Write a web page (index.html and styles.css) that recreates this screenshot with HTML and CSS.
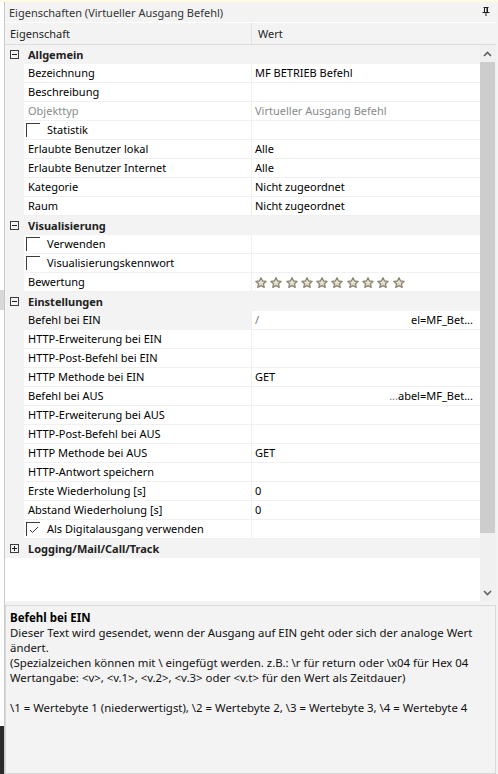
FILE: index.html
```html
<!DOCTYPE html>
<html lang="de">
<head>
    <meta charset="UTF-8">
    <title>Eigenschaften (Virtueller Ausgang Befehl)</title>
    <link rel="stylesheet" href="styles.css">
</head>
<body>
    <div class="topline"></div>
    <div class="frame">
        <div class="side">
            <div class="side-mark"></div>
            <div class="side-dark"></div>
        </div>

        <div class="panel">
            <div class="titlebar">
                <span>Eigenschaften (Virtueller Ausgang Befehl)</span>
                <svg class="pin" width="8" height="9" viewBox="0 0 8 9">
                    <path d="M1.5 0.5h5M2.5 0.5v5M5.5 0.5v5M0.5 5.5h7M4 5.5v3.5" stroke="#1e1e1e" stroke-width="1" fill="none"/>
                    <rect x="4.5" y="1" width="1" height="4.5" fill="#1e1e1e"/>
                </svg>
            </div>

            <div class="header">
                <div class="h-name">Eigenschaft</div>
                <div class="h-value">Wert</div>
            </div>

            <div class="grid-area">
                <div class="rows">
                    <!-- Allgemein -->
                    <div class="row cat">
                        <svg class="toggle" width="9" height="9" viewBox="0 0 9 9"><rect x="0.5" y="0.5" width="8" height="8" fill="none" stroke="#3c3c3c"/><path d="M2 4.5h5" stroke="#1e1e1e"/></svg>
                        <span>Allgemein</span>
                    </div>
                    <div class="row"><div class="margin"></div><div class="name">Bezeichnung</div><div class="value">MF BETRIEB Befehl</div></div>
                    <div class="row"><div class="margin"></div><div class="name">Beschreibung</div><div class="value"></div></div>
                    <div class="row readonly"><div class="margin"></div><div class="name">Objekttyp</div><div class="value">Virtueller Ausgang Befehl</div></div>
                    <div class="row"><div class="margin"></div><div class="name check"><span class="box"></span>Statistik</div><div class="value"></div></div>
                    <div class="row"><div class="margin"></div><div class="name">Erlaubte Benutzer lokal</div><div class="value">Alle</div></div>
                    <div class="row"><div class="margin"></div><div class="name">Erlaubte Benutzer Internet</div><div class="value">Alle</div></div>
                    <div class="row"><div class="margin"></div><div class="name">Kategorie</div><div class="value">Nicht zugeordnet</div></div>
                    <div class="row"><div class="margin"></div><div class="name">Raum</div><div class="value">Nicht zugeordnet</div></div>

                    <!-- Visualisierung -->
                    <div class="row cat">
                        <svg class="toggle" width="9" height="9" viewBox="0 0 9 9"><rect x="0.5" y="0.5" width="8" height="8" fill="none" stroke="#3c3c3c"/><path d="M2 4.5h5" stroke="#1e1e1e"/></svg>
                        <span>Visualisierung</span>
                    </div>
                    <div class="row"><div class="margin"></div><div class="name check"><span class="box"></span>Verwenden</div><div class="value"></div></div>
                    <div class="row"><div class="margin"></div><div class="name check"><span class="box"></span>Visualisierungskennwort</div><div class="value"></div></div>
                    <div class="row"><div class="margin"></div><div class="name">Bewertung</div><div class="value stars" id="stars"></div></div>

                    <!-- Einstellungen -->
                    <div class="row cat">
                        <svg class="toggle" width="9" height="9" viewBox="0 0 9 9"><rect x="0.5" y="0.5" width="8" height="8" fill="none" stroke="#3c3c3c"/><path d="M2 4.5h5" stroke="#1e1e1e"/></svg>
                        <span>Einstellungen</span>
                    </div>
                    <div class="row selected"><div class="margin"></div><div class="name">Befehl bei EIN</div><div class="value split"><span class="faint">/</span><span>el=MF_Bet...</span></div></div>
                    <div class="row"><div class="margin"></div><div class="name">HTTP-Erweiterung bei EIN</div><div class="value"></div></div>
                    <div class="row"><div class="margin"></div><div class="name">HTTP-Post-Befehl bei EIN</div><div class="value"></div></div>
                    <div class="row"><div class="margin"></div><div class="name">HTTP Methode bei EIN</div><div class="value">GET</div></div>
                    <div class="row"><div class="margin"></div><div class="name">Befehl bei AUS</div><div class="value split"><span></span><span><span class="faint">...</span>abel=MF_Bet...</span></div></div>
                    <div class="row"><div class="margin"></div><div class="name">HTTP-Erweiterung bei AUS</div><div class="value"></div></div>
                    <div class="row"><div class="margin"></div><div class="name">HTTP-Post-Befehl bei AUS</div><div class="value"></div></div>
                    <div class="row"><div class="margin"></div><div class="name">HTTP Methode bei AUS</div><div class="value">GET</div></div>
                    <div class="row"><div class="margin"></div><div class="name">HTTP-Antwort speichern</div><div class="value"></div></div>
                    <div class="row"><div class="margin"></div><div class="name">Erste Wiederholung [s]</div><div class="value">0</div></div>
                    <div class="row"><div class="margin"></div><div class="name">Abstand Wiederholung [s]</div><div class="value">0</div></div>
                    <div class="row"><div class="margin"></div><div class="name check"><span class="box"><svg width="10" height="8" viewBox="0 0 10 8"><path d="M1 4l2.5 2.5L9 1" stroke="#333" stroke-width="1" fill="none"/></svg></span>Als Digitalausgang verwenden</div><div class="value"></div></div>

                    <!-- Logging -->
                    <div class="row cat">
                        <svg class="toggle" width="9" height="9" viewBox="0 0 9 9"><rect x="0.5" y="0.5" width="8" height="8" fill="none" stroke="#3c3c3c"/><path d="M2 4.5h5M4.5 2v5" stroke="#1e1e1e"/></svg>
                        <span>Logging/Mail/Call/Track</span>
                    </div>
                </div>

                <div class="scrollbar">
                    <div class="arrow">
                        <svg width="9" height="6" viewBox="0 0 9 6"><path d="M1 5l3.5-3.5L8 5" stroke="#606060" stroke-width="1.6" fill="none"/></svg>
                    </div>
                    <div class="thumb"></div>
                    <div class="track"></div>
                    <div class="arrow">
                        <svg width="9" height="6" viewBox="0 0 9 6"><path d="M1 1l3.5 3.5L8 1" stroke="#606060" stroke-width="1.6" fill="none"/></svg>
                    </div>
                </div>
            </div>

            <div class="desc">
                <div class="desc-title">Befehl bei EIN</div>
                <div class="desc-text">
                    Dieser Text wird gesendet, wenn der Ausgang auf EIN geht oder sich der analoge Wert<br>
                    ändert.<br>
                    (Spezialzeichen können mit \ eingefügt werden. z.B.: \r für return oder \x04 für Hex 04<br>
                    Wertangabe: &lt;v&gt;, &lt;v.1&gt;, &lt;v.2&gt;, &lt;v.3&gt; oder &lt;v.t&gt; für den Wert als Zeitdauer)<br>
                    <br>
                    \1 = Wertebyte 1 (niederwertigst), \2 = Wertebyte 2, \3 = Wertebyte 3, \4 = Wertebyte 4
                </div>
            </div>
        </div>
        <div class="edge"></div>
    </div>

    <script>
        // Bewertung: 10 leere Sterne
        const stars = document.getElementById('stars');
        const star = '<svg width="12" height="11" viewBox="0 0 12 11">'
            + '<defs><linearGradient id="sg" x1="0" y1="0" x2="0" y2="1"><stop offset="0" stop-color="#f2efe6"/><stop offset="1" stop-color="#d6d1c0"/></linearGradient></defs>'
            + '<path d="M6 0.8l1.55 3.2 3.55 0.45-2.6 2.4 0.7 3.5L6 8.6 2.8 10.35l0.7-3.5-2.6-2.4 3.55-0.45z" fill="url(#sg)" stroke="#8c8672" stroke-width="1.3" stroke-linejoin="round"/></svg>';
        for (let i = 0; i < 10; i++) {
            stars.insertAdjacentHTML('beforeend', star);
        }
    </script>
</body>
</html>
```

FILE: styles.css
```css
html, body {
    margin: 0;
    padding: 0;
}

body {
    width: 498px;
    height: 774px;
    overflow: hidden;
    font-family: "Noto Sans", "Open Sans", sans-serif;
    font-size: 11px;
    color: #000;
    background: #f3f3f3;
}

.topline {
    height: 2px;
    background: #fdfbe4;
}

.frame {
    display: flex;
    height: 772px;
}

.side {
    width: 4px;
    border-right: 1px solid #c9c9c9;
    background: #fff;
    display: flex;
    flex-direction: column;
}

.side-mark {
    height: 20px;
    margin-top: 288px;
    background: #d8d8d8;
}

.side-dark {
    margin-top: auto;
    height: 48px;
    background: #2a2a2a;
}

.panel {
    width: 491px;
    display: flex;
    flex-direction: column;
}

.edge {
    flex: 1;
    background: #f3f3f3;
}

.titlebar {
    height: 20px;
    display: flex;
    align-items: center;
    justify-content: space-between;
    padding: 0 6px 0 4px;
    color: #333;
}

.pin {
    margin-top: -2px;
}

.header {
    height: 21px;
    border-top: 1px solid #fff;
    border-bottom: 1px solid #dcdcdc;
    display: flex;
    align-items: center;
    color: #1e1e1e;
}

.h-name {
    width: 241px;
    padding-left: 5px;
    border-right: 1px solid #e2e2e2;
    line-height: 21px;
}

.h-value {
    padding-left: 6px;
}

.grid-area {
    height: 556px;
    display: flex;
    background: #fff;
}

.rows {
    width: 475px;
}

.row {
    height: 19px;
    display: flex;
    line-height: 17px;
}

.row .margin {
    width: 19px;
    background: #f3f3f3;
}

.row .name {
    width: 223px;
    padding-left: 4px;
    border-right: 1px solid #f0f0f0;
    border-bottom: 1px solid #f0f0f0;
    white-space: nowrap;
}

.row .value {
    flex: 1;
    padding-left: 3px;
    border-bottom: 1px solid #f0f0f0;
    white-space: nowrap;
}

.row.readonly {
    color: #8a8a8a;
}

.row.selected .name {
    background: #f3f3f3;
    border-bottom-color: #f3f3f3;
}

.value.split {
    display: flex;
    justify-content: space-between;
    padding-right: 7px;
}

.faint {
    color: #777;
}

.name.check {
    display: flex;
    align-items: flex-start;
    padding-left: 2px;
    width: 225px;
}

.box {
    width: 13px;
    height: 13px;
    margin: 2px 7px 0 0;
    border-top: 1px solid #3c3c3c;
    border-left: 1px solid #3c3c3c;
    display: flex;
    align-items: center;
    justify-content: center;
}

.stars {
    display: flex;
    align-items: center;
    gap: 3.3px;
    padding-left: 6px;
}

.row.cat {
    background: #f3f3f3;
    align-items: center;
    font-weight: bold;
    color: #222;
}

.toggle {
    margin: 0 9px 0 5px;
}

.scrollbar {
    width: 16px;
    display: flex;
    flex-direction: column;
    background: #f0f0f0;
}

.arrow {
    height: 17px;
    width: 15px;
    display: flex;
    align-items: center;
    justify-content: center;
}

.thumb {
    height: 471px;
    width: 15px;
    background: #cdcdcd;
}

.track {
    flex: 1;
}

.desc {
    margin-top: 4px;
    flex: 1;
    border: 1px solid #d9d9d9;
    padding: 4px 4px;
    background: #f3f3f3;
    line-height: 15px;
}

.desc-title {
    font-weight: bold;
    font-size: 11.5px;
}

.desc-text {
    color: #111;
    font-size: 11.4px;
}
```
